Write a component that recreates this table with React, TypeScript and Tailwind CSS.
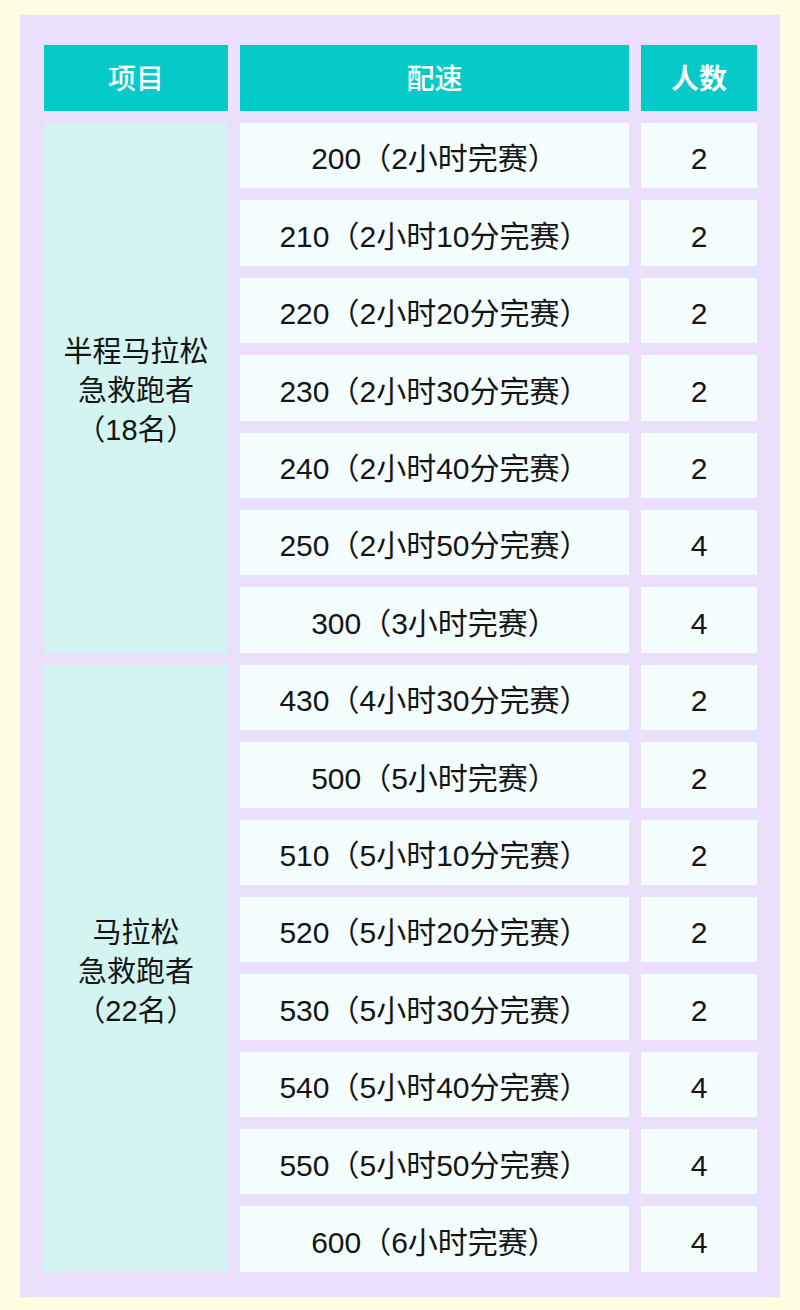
import React from 'react';

const halfRows: [string, number][] = [
  ['200（2小时完赛）', 2],
  ['210（2小时10分完赛）', 2],
  ['220（2小时20分完赛）', 2],
  ['230（2小时30分完赛）', 2],
  ['240（2小时40分完赛）', 2],
  ['250（2小时50分完赛）', 4],
  ['300（3小时完赛）', 4],
];

const fullRows: [string, number][] = [
  ['430（4小时30分完赛）', 2],
  ['500（5小时完赛）', 2],
  ['510（5小时10分完赛）', 2],
  ['520（5小时20分完赛）', 2],
  ['530（5小时30分完赛）', 2],
  ['540（5小时40分完赛）', 4],
  ['550（5小时50分完赛）', 4],
  ['600（6小时完赛）', 4],
];

const cell = 'bg-[#f5fefe] flex items-center justify-center pt-2 text-[30px]';

function Rows({ rows }: { rows: [string, number][] }) {
  return (
    <>
      {rows.map(([pace, n]) => (
        <React.Fragment key={pace}>
          <div className={`${cell} col-start-2`}>{pace}</div>
          <div className={`${cell} col-start-3`}>{n}</div>
        </React.Fragment>
      ))}
    </>
  );
}

export default function App() {
  return (
    <div
      className="min-h-[1310px] bg-[#fdfee1] pt-[15px] px-5 text-[#151515]"
      style={{ fontFamily: '"Liberation Sans", "Noto Sans CJK SC", sans-serif' }}
    >
      <div className="bg-[#ebe0fb] pt-[30px] px-6 pb-[25px]">
        <div className="grid grid-cols-[184px_389px_116px] grid-rows-[66px_repeat(15,65.4px)] gap-3 leading-[1.35]">
          {/* header */}
          <div className="bg-[#05cac8] text-white text-[28px] font-medium flex items-center justify-center pt-1">项目</div>
          <div className="bg-[#05cac8] text-white text-[28px] font-medium flex items-center justify-center pt-1">配速</div>
          <div className="bg-[#05cac8] text-white text-[28px] font-bold flex items-center justify-center pt-1">人数</div>

          {/* 半程 */}
          <div className="row-span-7 col-start-1 bg-[#d3f4f1] flex flex-col items-center justify-center text-center text-[29px] pt-2">
            <div>半程马拉松</div>
            <div>急救跑者</div>
            <div>（18名）</div>
          </div>
          <Rows rows={halfRows} />

          {/* 全程 */}
          <div className="row-span-8 col-start-1 bg-[#d3f4f1] flex flex-col items-center justify-center text-center text-[29px] pt-2">
            <div>马拉松</div>
            <div>急救跑者</div>
            <div>（22名）</div>
          </div>
          <Rows rows={fullRows} />
        </div>
      </div>
    </div>
  );
}
